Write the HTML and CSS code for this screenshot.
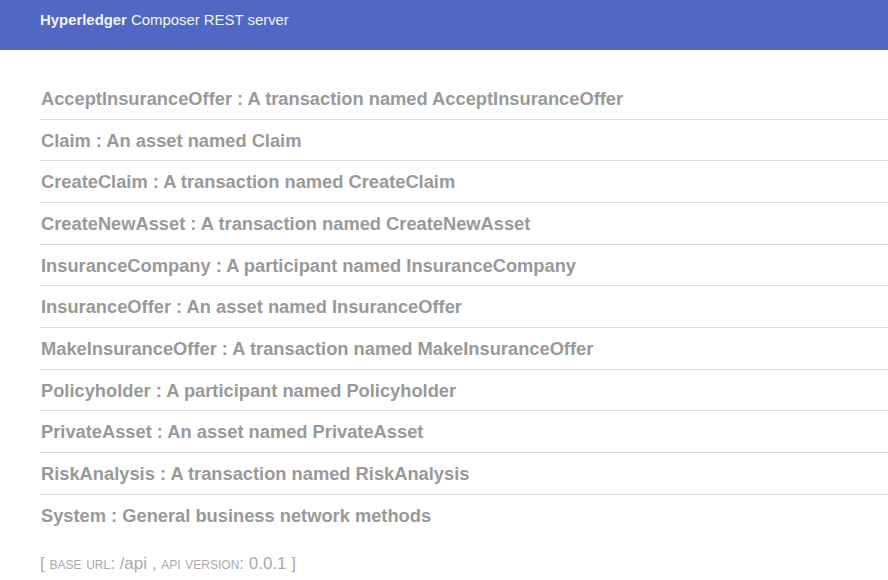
FILE: index.html
```html
<!DOCTYPE html>
<html>
<head>
<meta charset="utf-8">
<link rel="stylesheet" href="styles.css">
</head>
<body>
<header class="header">
  <span class="brand"><b>Hyperledger</b> Composer REST server</span>
</header>
<main class="content">
  <ul class="resources">
    <li class="resource"><h2>AcceptInsuranceOffer : A transaction named AcceptInsuranceOffer</h2></li>
    <li class="resource"><h2>Claim : An asset named Claim</h2></li>
    <li class="resource"><h2>CreateClaim : A transaction named CreateClaim</h2></li>
    <li class="resource"><h2>CreateNewAsset : A transaction named CreateNewAsset</h2></li>
    <li class="resource"><h2>InsuranceCompany : A participant named InsuranceCompany</h2></li>
    <li class="resource"><h2>InsuranceOffer : An asset named InsuranceOffer</h2></li>
    <li class="resource"><h2>MakeInsuranceOffer : A transaction named MakeInsuranceOffer</h2></li>
    <li class="resource"><h2>Policyholder : A participant named Policyholder</h2></li>
    <li class="resource"><h2>PrivateAsset : An asset named PrivateAsset</h2></li>
    <li class="resource"><h2>RiskAnalysis : A transaction named RiskAnalysis</h2></li>
    <li class="resource"><h2>System : General business network methods</h2></li>
  </ul>
  <div class="footer">[ <span class="sc">base url</span>: /api , <span class="sc">api version</span>: 0.0.1 ]</div>
</main>
</body>
</html>
```
FILE: styles.css
```css
* { box-sizing: border-box; }
html, body { margin: 0; padding: 0; background: #fff; }
body { font-family: "Liberation Sans", Arial, sans-serif; }
.header {
  height: 50px;
  background: #5067c4;
  padding: 12px 40px 0;
  color: #f4f4f4;
  font-size: 14.9px;
}
.brand b { font-weight: bold; }
.content { padding: 28px 0 0 40px; }
.resources { list-style: none; margin: 0; padding: 0; }
.resource { border-bottom: 1px solid #ddd; }
.resource:last-child { border-bottom: none; }
.resource h2 {
  margin: 0;
  padding: 11px 0 9px 1px;
  font-size: 18.3px;
  line-height: 20.67px;
  font-weight: bold;
  color: #999;
}
.footer {
  margin-top: 19px;
  font-size: 17px;
  color: #aaa;
}
.sc { font-variant: small-caps; text-transform: lowercase; }
```
